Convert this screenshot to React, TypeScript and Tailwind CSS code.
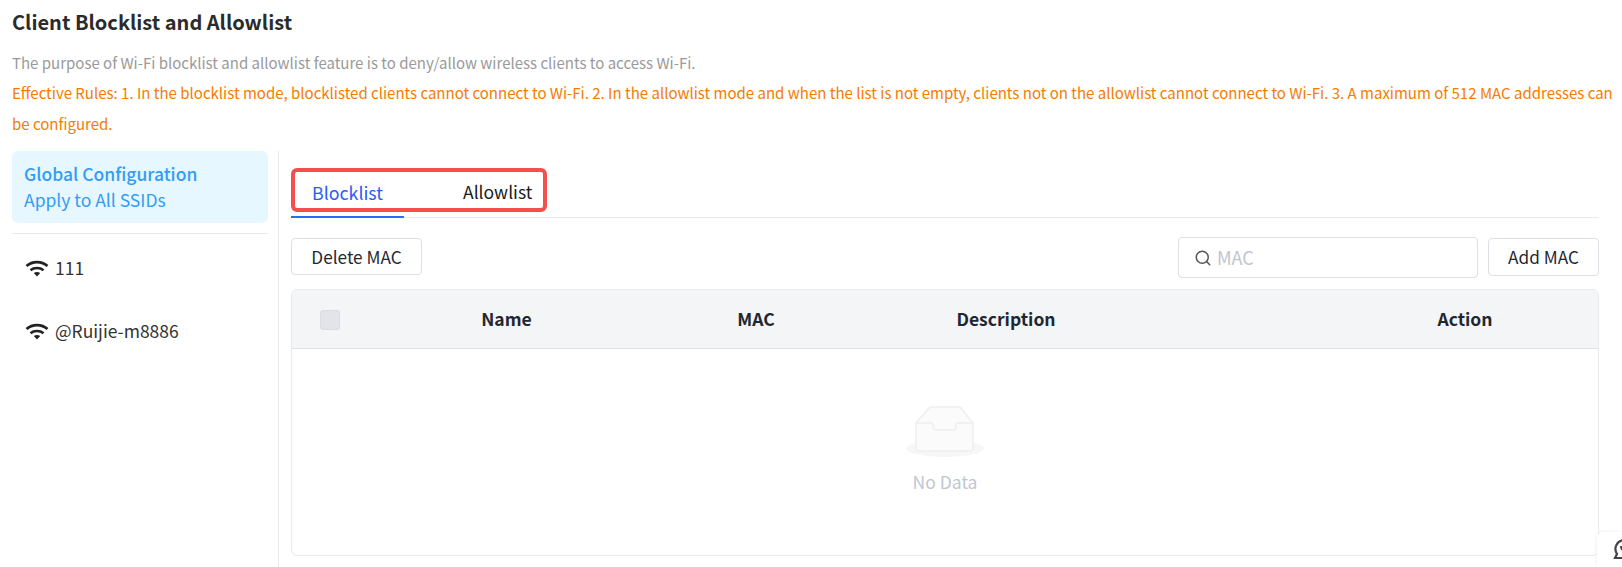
import { Search } from "lucide-react";

function WifiIcon() {
  return (
    <svg width="24" height="17" viewBox="0 0 24 17" className="shrink-0 text-[#222]">
      <path d="M1.500 6C7.300 0.800 16.700 0.800 22.500 6" fill="none" stroke="currentColor" strokeWidth="2.800" />
      <path d="M5.500 10.200C9 7.300 15 7.300 18.500 10.200" fill="none" stroke="currentColor" strokeWidth="2.600" />
      <path d="M8.800 13 Q12 11 15.200 13 L12 16.500 Z" fill="currentColor" />
    </svg>
  );
}

function EmptyBox() {
  return (
    <svg width="80" height="54" viewBox="0 0 80 54">
      <ellipse cx="40" cy="43.500" rx="39" ry="8.500" fill="#f7f7f7" />
      <path
        d="M11 18 L24 3 Q25 2 27 2 L53 2 Q55 2 56 3 L68 18 L68 43 Q68 46 65 46 L14 46 Q11 46 11 43 Z"
        fill="#fbfbfb"
        stroke="#eeeeee"
        strokeWidth="1.500"
      />
      <path
        d="M11 18 L26 18 Q28 18 28 21 Q28 25 31 25 L48 25 Q51 25 51 21 Q51 18 53 18 L68 18"
        fill="none"
        stroke="#eeeeee"
        strokeWidth="1.500"
      />
    </svg>
  );
}

function OutlineButton({ label, className }: { label: string; className: string }) {
  return (
    <button className={`rounded border border-[#dcdfe6] bg-white text-[17.2px] text-[#1f2733] ${className}`}>
      {label}
    </button>
  );
}

export default function App() {
  return (
    <div className="relative h-[567px] w-[1622px] overflow-hidden bg-white font-['Noto_Sans_CJK_SC','Noto_Sans',sans-serif]">
      <div className="pr-2 pl-3">
        <h1 className="pt-[8px] text-[20px] leading-[27px] font-semibold text-[#2b2b2b]">
          Client Blocklist and Allowlist
        </h1>
        <p className="mt-[12px] text-[15px] leading-[31px] text-[#9a9a9a]">
          The purpose of Wi-Fi blocklist and allowlist feature is to deny/allow wireless clients to access Wi-Fi.
        </p>
        <p className="-mt-[1px] text-[15px] leading-[31px] text-[#f57c00]">
          Effective Rules: 1. In the blocklist mode, blocklisted clients cannot connect to Wi-Fi. 2. In the allowlist
          mode and when the list is not empty, clients not on the allowlist cannot connect to Wi-Fi. 3. A maximum of 512
          MAC addresses can be configured.
        </p>
      </div>

      <div className="mt-[12px] flex pl-3">
        {/* SSID list */}
        <aside className="h-[430px] w-[267px] shrink-0 border-r border-[#e8eaee] pr-[10px]">
          <div className="h-[72px] rounded-md bg-[#e6f7ff] px-3 pt-[10px] text-[17.5px] leading-[26px] text-[#339cf5]">
            <div className="font-medium">Global Configuration</div>
            <div>Apply to All SSIDs</div>
          </div>
          <div className="mt-[10px] border-t border-[#e8eaee]" />
          <ul className="pt-[3px] pl-[13px] text-[17.5px] text-[#333]">
            <li className="flex h-[63px] items-center gap-[6px]">
              <WifiIcon />
              <span>111</span>
            </li>
            <li className="flex h-[63px] items-center gap-[6px]">
              <WifiIcon />
              <span>@Ruijie-m8886</span>
            </li>
          </ul>
        </aside>

        {/* Main panel */}
        <main className="box-content w-[1308px] shrink-0 pl-[12px]">
          <div className="relative flex h-[67px] items-end border-b border-[#e8eaee]">
            <div className="relative flex h-[49px] w-[113px] items-center justify-center text-[17.8px] text-[#2b5cf6] after:absolute after:bottom-[-1px] after:left-0 after:h-[2px] after:w-full after:bg-[#2b6cf6]">
              Blocklist
            </div>
            <div className="flex h-[49px] items-center pl-[59px] text-[17.5px] text-[#1a1a1a]">Allowlist</div>
            <div className="absolute top-[17px] left-0 h-[44px] w-[256px] rounded-md border-4 border-[#f44f4f]" />
          </div>

          <div className="mt-[20px] flex items-start justify-between">
            <OutlineButton label="Delete MAC" className="h-[37px] w-[131px]" />
            <div className="flex items-start">
              <div className="-mt-px flex h-[41px] w-[300px] items-center rounded border border-[#dcdfe6] px-[15px]">
                <Search size={18} className="text-[#555]" />
                <span className="ml-[5px] text-[18px] text-[#c0c4cc]">MAC</span>
              </div>
              <OutlineButton label="Add MAC" className="ml-[10px] h-[38px] w-[111px]" />
            </div>
          </div>

          <div className="mt-[11px] h-[267px] w-[1308px] overflow-hidden rounded-md border border-[#e8eaee]">
            <div className="grid h-[59px] grid-cols-[75px_279px_220px_280px_1fr] items-center border-b border-[#dfe2e8] bg-[#f4f5f7] pt-px text-center text-[17.5px] font-semibold text-[#1f2733]">
              <div className="flex justify-center">
                <span className="h-[20px] w-[20px] rounded-[3px] border border-[#d8dbe2] bg-[#e2e4ea]" />
              </div>
              <div>Name</div>
              <div>MAC</div>
              <div>Description</div>
              <div className="pl-[186px]">Action</div>
            </div>
            <div className="flex h-[206px] flex-col items-center pt-[56px]">
              <EmptyBox />
              <span className="mt-[10px] text-[17.5px] text-[#bfc6d2]">No Data</span>
            </div>
          </div>
        </main>
      </div>

      {/* Chat widget */}
      <div className="absolute right-0 bottom-0 flex h-[35px] w-[25px] justify-start rounded-tl-md bg-white pt-[6px] pl-[15px] shadow-[0_0_4px_rgba(0,0,0,0.08)]">
        <svg width="24" height="24" viewBox="0 0 24 24" fill="none" stroke="#444" strokeWidth="2.200" className="shrink-0">
          <path d="M12 2a9 9 0 0 1 0 18H3l2-4A9 9 0 0 1 12 2z" />
          <path d="M9 8c0 3 3 6 6 6" />
        </svg>
      </div>
    </div>
  );
}
